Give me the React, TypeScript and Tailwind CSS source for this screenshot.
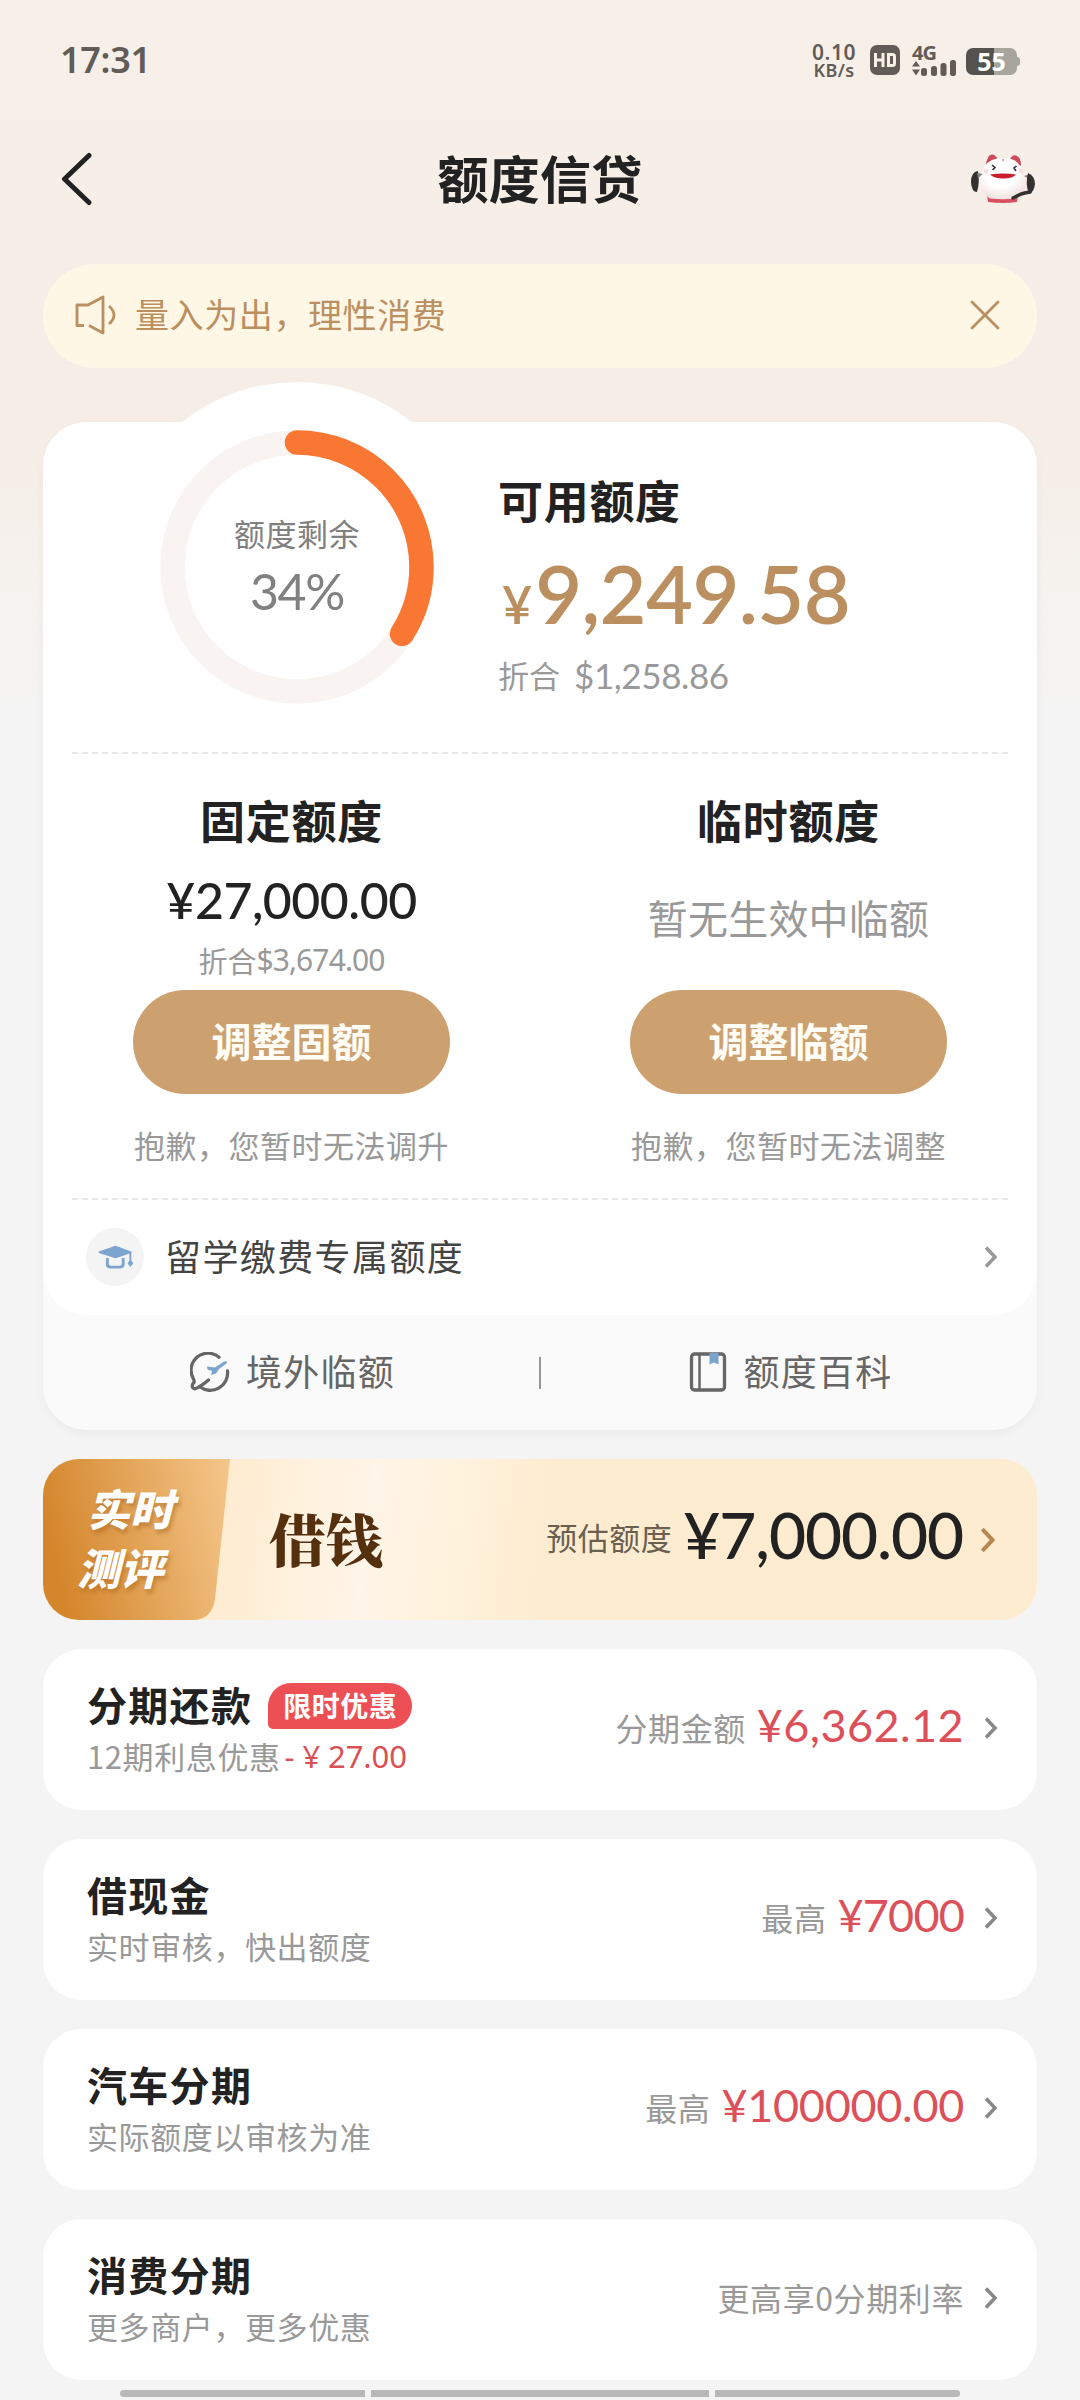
import React from "react";

type ProductRow = {
  title: string;
  desc: string;
  badge?: string;
  discount?: string;
  label: string;
  amount?: string;
  amountClass?: string;
};

const products: ProductRow[] = [
  {
    title: "分期还款",
    badge: "限时优惠",
    desc: "12期利息优惠",
    discount: "27.00",
    label: "分期金额",
    amount: "6,362.12",
    amountClass: "tracking-[0.4px]",
  },
  { title: "借现金", desc: "实时审核，快出额度", label: "最高", amount: "7000", amountClass: "tracking-[-0.8px]" },
  { title: "汽车分期", desc: "实际额度以审核为准", label: "最高", amount: "100000.00", amountClass: "tracking-[-0.3px]" },
  { title: "消费分期", desc: "更多商户，更多优惠", label: "更高享0分期利率" },
];

const Chevron = ({ className }: { className: string }) => (
  <svg className={className} viewBox="0 0 14 22" fill="none" stroke="currentColor" strokeWidth="3.500">
    <path d="M2 1.500 L11 11 L2 20.500" />
  </svg>
);

// Phone status bar
const StatusBar = () => (
  <div className="flex h-[120px] items-center justify-between px-[60px] text-[#625c58]">
    <span className="font-['Noto_Sans',sans-serif] text-[36px] leading-[40px] font-semibold tracking-[-0.300px]">17:31</span>
    <div className="flex items-center">
      <div className="flex w-[46px] flex-col items-center pt-[2px] font-['Noto_Sans',sans-serif] font-semibold">
        <span className="text-[21px] leading-[18px] tracking-[0.600px]">0.10</span>
        <span className="text-[18px] leading-[18px] tracking-[0.300px]">KB/s</span>
      </div>
      <svg className="ml-[13px] h-[30px] w-[30px]" viewBox="0 0 30 30">
        <rect width="30" height="30" rx="7" fill="#625c58" />
        <path d="M5.500 8v14M13 8v14M5.500 15h7.500M18.500 9.500h4q2 0 2 2v7q0 2-2 2h-4z" fill="none" stroke="#f7f0e9" strokeWidth="3" />
      </svg>
      <div className="ml-[12px] flex w-[44px] flex-col">
        <span className="pt-[1px] font-['Noto_Sans',sans-serif] text-[20px] leading-[15px] font-bold tracking-[-1px]">4G</span>
        <svg className="h-[17px] w-[44px]" viewBox="0 0 44 17" fill="#625c58">
          <path d="M0 6.500 L4 1 L8 6.500z M0 9.500 L4 15.500 L8 9.500z" />
          <rect x="9" y="8" width="6" height="8" rx="2.500" />
          <rect x="19" y="6" width="6" height="10" rx="2.500" />
          <rect x="28.500" y="3" width="6" height="13" rx="2.500" />
          <rect x="38" y="0" width="6" height="16" rx="2.500" />
        </svg>
      </div>
      <div className="mt-[3px] ml-[10px] flex items-center">
        <div className="flex h-[27px] w-[51px] items-center justify-center rounded-[7px] bg-[linear-gradient(90deg,#53524e_54%,#a6a69d_54%)]">
          <span className="font-['Noto_Sans',sans-serif] text-[25px] leading-[27px] font-bold text-white">55</span>
        </div>
        <div className="h-[9px] w-[3px] rounded-r-[3px] bg-[#a6a69d]" />
      </div>
    </div>
  </div>
);

// Customer service mascot
const Mascot = () => (
  <svg className="h-[50px] w-[66px]" viewBox="0 0 66 50">
    <defs>
      <radialGradient id="body" cx="45%" cy="35%" r="70%">
        <stop offset="0.5" stopColor="#ffffff" />
        <stop offset="1" stopColor="#f0dcdc" />
      </radialGradient>
    </defs>
    <path d="M16 11 Q17 1 22 0.500 Q27 1 28 7z M39 7 Q42 0 46 1.500 Q51 3 51 12z" fill="#cf4a5b" />
    <path d="M17 41 H48 L47 48 Q33 50 18 48z" fill="#d94f60" />
    <path d="M33 4 Q46 4 50 12 Q53 17 56 22 Q60 35 46 44.500 Q33 46 20 44.500 Q5 35 10 22 Q12 17 15 12 Q20 4 33 4z" fill="url(#body)" />
    <path d="M22 11 l3 2.500 -2.500 2.500 M46.500 12 l-2.500 2 2 3" fill="none" stroke="#33302f" strokeWidth="1.600" />
    <path d="M20 20.500 Q33 18.500 46 20.500 Q43 24.500 33 24.500 Q24 24.500 20 20.500z" fill="#c8202c" />
    <circle cx="16" cy="17" r="2.500" fill="#fbdfe2" />
    <circle cx="51" cy="17" r="2.500" fill="#fbdfe2" />
    <circle cx="33" cy="6" r="1.200" fill="#e9a3ab" />
    <path d="M8 17 Q1 18 1 28 Q1.500 38 7 38 Q10 28 8 17z" fill="#35312f" />
    <path d="M7 19 l6 1 -5 4z M54 22 l6 -2 -1 5z" fill="#85848a" />
    <path d="M58 19 Q65 22 65 30 Q64 38 59 40 Q55 30 58 19z" fill="#35312f" />
    <path d="M60 38 Q54 39 51 40 L43 44" fill="none" stroke="#35312f" strokeWidth="3.500" strokeLinecap="round" />
  </svg>
);

const Header = () => (
  <div className="flex h-[118px] items-center justify-between pr-[44px] pl-[60px]">
    <svg className="h-[54px] w-[74px]" viewBox="0 0 74 54" fill="none" stroke="#222" strokeWidth="5" strokeLinecap="round" strokeLinejoin="round">
      <path d="M29 3.500 L4.500 27 L29 50.500" />
    </svg>
    <h1 className="mt-[-4px] ml-[-24px] text-[51px] leading-[60px] font-bold tracking-[0.300px] text-[#222]">额度信贷</h1>
    <Mascot />
  </div>
);

const Notice = () => (
  <div className="mx-[43px] mt-[26px] flex h-[104px] items-center rounded-full bg-[#fef7e6] pr-[37px] pb-[3px] pl-[32px] text-[#bb8f5f]">
    <svg className="h-[40px] w-[42px]" viewBox="0 0 42 40" fill="none" stroke="currentColor" strokeWidth="2.800" strokeLinejoin="round">
      <path d="M9 30.500 H2 V10 H13 L28 2 V38 L14 30.500" />
      <path d="M34 11 Q44 20 34 29" />
    </svg>
    <span className="mt-[-2px] ml-[18px] text-[34px] leading-[40px] tracking-[0.600px]">量入为出，理性消费</span>
    <svg className="ml-auto h-[30px] w-[30px]" viewBox="0 0 30 30" stroke="currentColor" strokeWidth="2.800" strokeLinecap="round">
      <path d="M2 2 L28 28 M28 2 L2 28" />
    </svg>
  </div>
);

const Dashes = () => (
  <div className="mx-[29px] h-[2px] bg-[repeating-linear-gradient(90deg,#e8e8e8_0px,#e8e8e8_6px,transparent_6px,transparent_10px)]" />
);

const QuotaRing = ({ percent }: { percent: number }) => {
  const r = 124.5;
  const length = 2 * Math.PI * r;
  return (
    <div className="relative h-[370px] w-[370px] rounded-full bg-white">
      <svg className="h-[370px] w-[370px] -rotate-90" viewBox="0 0 370 370" fill="none" strokeWidth="24.500">
        <circle cx="185" cy="185" r={r} stroke="#f9f4f1" />
        <circle
          cx="185"
          cy="185"
          r={r}
          stroke="#f97733"
          strokeLinecap="round"
          strokeDasharray={`${(length * percent) / 100} ${length}`}
        />
      </svg>
      <div className="absolute inset-0 flex flex-col items-center text-[#808080]">
        <span className="mt-[131px] text-[31px] leading-[40px] tracking-[0.500px]">额度剩余</span>
        <span className="mt-[10px] font-['Lato',sans-serif] text-[50px] leading-[56px] tracking-[-1.300px]">{percent}%</span>
      </div>
    </div>
  );
};

const Card = () => (
  <div className="mx-[43px] mt-[54px] h-[1008px] rounded-[44px] bg-[#fafafa] shadow-[0_4px_10px_rgba(0,0,0,0.04)]">
    <div className="flex h-[893px] flex-col rounded-[44px] bg-white">
      <div className="flex h-[330px]">
        <div className="mt-[-40px] ml-[69px]">
          <QuotaRing percent={34} />
        </div>
        <div className="ml-[16px] flex flex-col">
          <h2 className="mt-[48px] text-[45px] leading-[60px] font-bold tracking-[0.700px] text-[#222]">可用额度</h2>
          <div className="mt-[21px] flex h-[84px] items-baseline font-['Lato',sans-serif] font-semibold text-[#bb8f5f]">
            <span className="ml-[4px] text-[52px] leading-[84px]">¥</span>
            <span className="ml-[3px] text-[81px] leading-[84px] tracking-[-0.600px]">9,249.58</span>
          </div>
          <div className="mt-[20px] flex items-center text-[31px] leading-[40px] text-[#999]">
            折合
            <span className="ml-[14px] font-['Lato',sans-serif] text-[35px] tracking-[-0.400px]">$1,258.86</span>
          </div>
        </div>
      </div>
      <Dashes />
      <div className="grid h-[444px] grid-cols-2">
        <div className="flex flex-col items-center">
          <h3 className="mt-[36px] text-[45px] leading-[60px] font-bold tracking-[0.700px] text-[#222]">固定额度</h3>
          <div className="mt-[20px] flex h-[60px] items-center font-['Lato',sans-serif] text-[50px] leading-[60px] font-medium tracking-[-0.500px] text-[#222]">
            <span>¥</span>
            <span>27,000.00</span>
          </div>
          <div className="mt-[10px] flex h-[40px] items-center text-[29px] leading-[40px] text-[#999]">
            折合
            <span className="font-['Noto_Sans',sans-serif] text-[30px] tracking-[-0.900px]">$3,674.00</span>
          </div>
          <button className="mt-[10px] h-[104px] w-[317px] rounded-full bg-[#cca16f] pb-[4px] text-[40px] leading-[60px] font-bold text-[#fffdf5]">
            调整固额
          </button>
          <span className="mt-[31px] text-[31px] leading-[40px] tracking-[0.500px] text-[#999]">抱歉，您暂时无法调升</span>
        </div>
        <div className="flex flex-col items-center">
          <h3 className="mt-[36px] text-[45px] leading-[60px] font-bold tracking-[0.700px] text-[#222]">临时额度</h3>
          <span className="mt-[42px] text-[40px] leading-[50px] tracking-[0.200px] text-[#999]">暂无生效中临额</span>
          <button className="mt-[48px] h-[104px] w-[317px] rounded-full bg-[#cca16f] pb-[4px] text-[40px] leading-[60px] font-bold text-[#fffdf5]">
            调整临额
          </button>
          <span className="mt-[31px] text-[31px] leading-[40px] tracking-[0.500px] text-[#999]">抱歉，您暂时无法调整</span>
        </div>
      </div>
      <Dashes />
      <div className="flex h-[115px] items-center pr-[39px] pb-[1px] pl-[43px] text-[#444]">
        <div className="flex h-[58px] w-[58px] items-center justify-center rounded-full bg-[#f4f4f4]">
          <svg className="h-[24px] w-[37px]" viewBox="0 0 38 25" fill="none" stroke="#7ba4cf" strokeWidth="3">
            <path d="M19 1.500 L35 7.500 L19 13 L2 7.500z" fill="#7ba4cf" strokeWidth="1.500" strokeLinejoin="round" />
            <path d="M10.500 13.500 V20 Q10.500 23 14 23 H23 Q27 23 27 20 V13.500" />
            <path d="M34.500 7.500 V18" strokeWidth="2" />
            <path d="M34.500 15 L37.500 19 L34.500 23 L31.500 19z" fill="#7ba4cf" stroke="none" />
          </svg>
        </div>
        <span className="mt-[-5px] ml-[21px] text-[36px] leading-[50px] tracking-[1.400px]">留学缴费专属额度</span>
        <Chevron className="ml-auto h-[22px] w-[14px] text-[#999]" />
      </div>
    </div>
    <div className="flex h-[115px] items-center text-[36px] leading-[50px] tracking-[1.200px] text-[#666]">
      <div className="flex flex-1 items-center justify-center pl-[3px]">
        <svg className="mr-[16px] mb-[2px] h-[40px] w-[40px]" viewBox="0 0 40 40" fill="none" stroke="#666" strokeWidth="3.300" strokeLinecap="round">
          <path d="M29 5.200 A17 17 0 0 0 3.500 27 Q5 30 3 31.500 Q1 36 4.500 36.800 Q9 36 18.500 28" />
          <path d="M37.500 19 A17.300 17.300 0 0 1 9.500 34.500" />
          <path d="M17 14.500 L25 15.500 L34 9.500 Q38 8.500 36.500 11.500 L29 17 L26 21.500 L21 23 L22 19 L17.500 17.500z" fill="#7ba4cf" stroke="none" />
        </svg>
        <span className="mt-[-6px]">境外临额</span>
      </div>
      <div className="h-[32px] w-[2px] bg-[#999]" />
      <div className="flex flex-1 items-center justify-center pl-[3px]">
        <svg className="mr-[17px] mb-[2px] h-[40px] w-[38px]" viewBox="0 0 38 40" fill="none" stroke="#666" strokeWidth="3.300">
          <rect x="2.500" y="2" width="33" height="36" rx="3" />
          <path d="M10.500 2 V38" strokeWidth="2.500" />
          <path d="M20.500 1 H29.500 V12.500 L25 10.500 L20.500 12.500z" fill="#7ba4cf" stroke="none" />
        </svg>
        <span className="mt-[-6px]">额度百科</span>
      </div>
    </div>
  </div>
);

const LoanBanner = () => (
  <div className="mx-[43px] mt-[29px] flex h-[161px] items-center overflow-hidden rounded-[36px] bg-[linear-gradient(98deg,#feecd0_18%,#fff5e8_33%,#fff2de_40%,#fdecd0_51%)]">
    <div className="relative h-[161px] w-[187px]">
      <svg className="absolute inset-0 h-[161px] w-[187px]" viewBox="0 0 187 161">
        <defs>
          <linearGradient id="gold" x1="0" y1="0.300" x2="1" y2="0.100">
            <stop offset="0" stopColor="#d4862c" />
            <stop offset="1" stopColor="#f4c68a" />
          </linearGradient>
        </defs>
        <path d="M0 0 H187 L172 140 Q169 161 149 161 H0z" fill="url(#gold)" />
      </svg>
      <div className="relative flex flex-col pt-[19px] pl-[44px] text-[43px] leading-[59px] font-black text-white italic [text-shadow:2px_4px_4px_rgba(160,90,20,0.45)]">
        <span>实时</span>
        <span className="ml-[-10px]">测评</span>
      </div>
    </div>
    <span className="mt-[-6px] ml-[39px] font-['Noto_Serif_CJK_SC','Noto_Sans_CJK_SC',serif] text-[57px] leading-[70px] font-black text-[#54300f]">借钱</span>
    <div className="mr-[41px] ml-auto flex items-center">
      <span className="mt-[-5px] text-[31px] leading-[40px] tracking-[0.500px] text-[#6b5f50]">预估额度</span>
      <span className="mt-[-9px] ml-[11px] font-['Lato',sans-serif] text-[64px] leading-[70px] font-medium tracking-[-1.100px] text-[#222]">¥7,000.00</span>
      <Chevron className="ml-[17px] h-[26px] w-[16px] text-[#b88752]" />
    </div>
  </div>
);

const ProductCard = ({ item }: { item: ProductRow }) => (
  <div className="mx-[43px] flex h-[161px] items-center justify-between rounded-[38px] bg-white pr-[39px] pl-[44px]">
    <div className="flex flex-col">
      <div className="flex h-[50px] items-center">
        <span className="mt-[-4px] text-[40px] leading-[50px] font-bold tracking-[1.300px] text-[#222]">{item.title}</span>
        {item.badge && (
          <span className="ml-[16px] flex h-[46px] w-[144px] items-center justify-center rounded-[23px] rounded-bl-[5px] bg-[#ec5055] pb-[3px] text-[28px] leading-[40px] font-bold tracking-[0.500px] text-white">
            {item.badge}
          </span>
        )}
      </div>
      <div className="mt-[3px] flex h-[44px] items-center text-[31px] leading-[40px] tracking-[0.600px] text-[#999]">
        {item.desc}
        {item.discount && (
          <span className="ml-[4px] font-['Noto_Sans',sans-serif] tracking-[-0.100px] text-[#d95055]">- ¥ {item.discount}</span>
        )}
      </div>
    </div>
    <div className="flex items-center pb-[3px]">
      <span className="mt-[-3px] text-[32px] leading-[40px] tracking-[0.600px] text-[#999]">{item.label}</span>
      {item.amount && (
        <span className={`mt-[-6px] ml-[11px] font-['Lato',sans-serif] text-[45px] leading-[50px] text-[#dc5059] ${item.amountClass}`}>
          ¥{item.amount}
        </span>
      )}
      <Chevron className="ml-[20px] h-[22px] w-[14px] text-[#888]" />
    </div>
  </div>
);

export default function App() {
  return (
    <div className="flex h-[2400px] w-[1080px] flex-col overflow-hidden bg-[#f4f4f4] bg-[linear-gradient(180deg,#f7f0e8_0px,#f6eee6_420px,#f4f4f4_720px)] font-['Noto_Sans_CJK_SC',sans-serif]">
      <StatusBar />
      <Header />
      <Notice />
      <Card />
      <LoanBanner />
      <div className="mt-[29px] flex flex-col gap-[29px]">
        {products.map((item) => (
          <ProductCard key={item.title} item={item} />
        ))}
      </div>
      {/* Gesture navigation bar */}
      <div className="mt-[10px] flex h-[7px] justify-center gap-[6px]">
        <div className="w-[245px] rounded-l-full bg-[#b9b9b9]" />
        <div className="w-[338px] bg-[#b9b9b9]" />
        <div className="w-[245px] rounded-r-full bg-[#b9b9b9]" />
      </div>
    </div>
  );
}
